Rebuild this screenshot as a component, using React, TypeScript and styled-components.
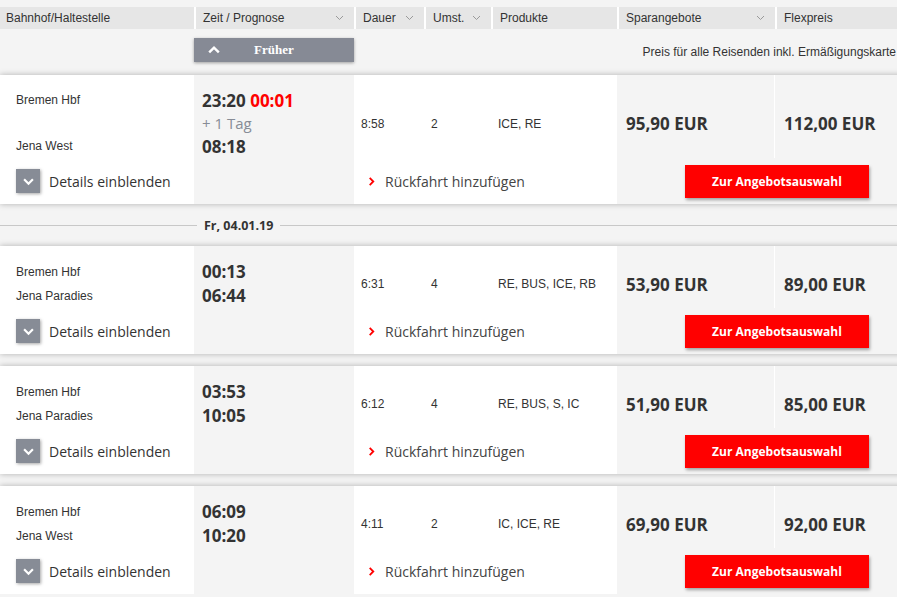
import styled, { createGlobalStyle } from "styled-components";

const GlobalStyle = createGlobalStyle`
  html, body {
    margin: 0;
    padding: 0;
    background: #f4f4f4;
    overflow: hidden;
  }
  * { box-sizing: border-box; }
`;

const COLS = "194px 160px 70px 67px 126px 158px 1fr";
const SANS = `"Liberation Sans", Arial, sans-serif`;
const DB = `"Open Sans", "Noto Sans", sans-serif`;

type Connection = {
  from: string;
  to: string;
  dep: string;
  delay?: string;
  nextDay?: boolean;
  arr: string;
  duration: string;
  changes: string;
  products: string;
  saver: string;
  flex: string;
};

const firstDay: Connection[] = [
  {
    from: "Bremen Hbf",
    to: "Jena West",
    dep: "23:20",
    delay: "00:01",
    nextDay: true,
    arr: "08:18",
    duration: "8:58",
    changes: "2",
    products: "ICE, RE",
    saver: "95,90 EUR",
    flex: "112,00 EUR",
  },
];

const secondDay: Connection[] = [
  {
    from: "Bremen Hbf",
    to: "Jena Paradies",
    dep: "00:13",
    arr: "06:44",
    duration: "6:31",
    changes: "4",
    products: "RE, BUS, ICE, RB",
    saver: "53,90 EUR",
    flex: "89,00 EUR",
  },
  {
    from: "Bremen Hbf",
    to: "Jena Paradies",
    dep: "03:53",
    arr: "10:05",
    duration: "6:12",
    changes: "4",
    products: "RE, BUS, S, IC",
    saver: "51,90 EUR",
    flex: "85,00 EUR",
  },
  {
    from: "Bremen Hbf",
    to: "Jena West",
    dep: "06:09",
    arr: "10:20",
    duration: "4:11",
    changes: "2",
    products: "IC, ICE, RE",
    saver: "69,90 EUR",
    flex: "92,00 EUR",
  },
];

const Page = styled.div`
  width: 910px;
  padding-top: 7px;
`;

const Header = styled.div`
  display: grid;
  grid-template-columns: ${COLS};
  height: 22px;
  background: #e6e6e6;
`;

const HeadCell = styled.div<{ $first?: boolean }>`
  display: flex;
  align-items: center;
  justify-content: space-between;
  padding: 0 10px 0 ${(p) => (p.$first ? "6px" : "7px")};
  border-left: ${(p) => (p.$first ? "none" : "2px solid #fff")};
  font-family: ${SANS};
  font-size: 12px;
  color: #333;
`;

const Toolbar = styled.div`
  display: grid;
  grid-template-columns: ${COLS};
  height: 46px;
`;

const EarlierButton = styled.button`
  grid-column: 2;
  margin-top: 9px;
  height: 24px;
  border: none;
  background: #868a95;
  box-shadow: 0 1px 3px rgba(0, 0, 0, 0.35);
  display: flex;
  align-items: center;
  padding: 0 0 0 14px;
  color: #fff;
  font-family: "Liberation Serif", "Times New Roman", serif;
  font-weight: 700;
  font-size: 13px;

  span {
    margin-left: 34px;
  }
`;

const PriceNote = styled.div`
  grid-column: 3 / 8;
  padding: 16px 14px 0 0;
  text-align: right;
  font-family: ${SANS};
  font-size: 12px;
  color: #333;
`;

const List = styled.div`
  display: flex;
  flex-direction: column;
  gap: 12px;
`;

const Row = styled.div`
  display: grid;
  grid-template-columns: ${COLS};
  grid-template-rows: auto 46px;
  background: #fff;
  box-shadow: 0 0 6px rgba(0, 0, 0, 0.28);
`;

const Cell = styled.div<{ $grey?: boolean; $divider?: boolean }>`
  padding: 14px 8px 0 8px;
  background: ${(p) => (p.$grey ? "#f4f4f4" : "#fff")};
  border-right: ${(p) => (p.$divider ? "1px solid #fff" : "none")};
  font-family: ${SANS};
  font-size: 12px;
  color: #333;
`;

const Stations = styled(Cell)<{ $lh: number }>`
  padding-left: 16px;
  display: flex;
  flex-direction: column;
  justify-content: space-between;
  line-height: ${(p) => p.$lh}px;
`;

const Times = styled(Cell)<{ $lh: number }>`
  font-family: ${DB};
  font-size: 16px;
  line-height: ${(p) => p.$lh}px;
`;

const TimeLine = styled.div`
  font-weight: 700;
  color: #333;
  font-size: 17px;
`;

const Delay = styled.span`
  color: #f00;
`;

const NextDay = styled.div`
  color: #878c96;
  font-size: 15px;
`;

const Centered = styled(Cell)`
  display: flex;
  align-items: center;
  padding-left: 7px;
`;

const Price = styled(Centered)`
  font-family: ${DB};
  font-weight: 700;
  font-size: 17px;
  padding-left: 9px;
`;

const ActionCell = styled.div<{ $grey?: boolean; $span?: string }>`
  grid-column: ${(p) => p.$span ?? "auto"};
  display: flex;
  align-items: center;
  background: ${(p) => (p.$grey ? "#f4f4f4" : "#fff")};
  font-family: ${DB};
  font-size: 14px;
  color: #333;
`;

const DetailsToggle = styled.div`
  display: flex;
  align-items: center;
  gap: 9px;
  padding-left: 16px;
`;

const SquareButton = styled.span`
  width: 24px;
  height: 24px;
  background: #878c96;
  box-shadow: 1px 1px 3px rgba(0, 0, 0, 0.35);
  display: flex;
  align-items: center;
  justify-content: center;
`;

const ReturnLink = styled.div`
  display: flex;
  align-items: center;
  gap: 9px;
  padding-left: 13px;
  color: #444;
`;

const OfferButton = styled.button`
  margin-left: 68px;
  width: 184px;
  height: 33px;
  border: none;
  background: #f00;
  color: #fff;
  font-family: ${DB};
  font-weight: 700;
  font-size: 12px;
  box-shadow: 1px 2px 3px rgba(0, 0, 0, 0.35);
`;

const DateBar = styled.div`
  height: 18px;
  display: flex;
  align-items: center;
`;

const Rule = styled.div<{ $w?: number }>`
  height: 1px;
  background: #c8c8c8;
  flex: ${(p) => (p.$w ? `0 0 ${p.$w}px` : "1")};
`;

const DateLabel = styled.span`
  padding: 0 7px;
  font-family: ${DB};
  font-weight: 700;
  font-size: 12.5px;
  color: #333;
`;

const SortArrow = () => (
  <svg width="9" height="6" viewBox="0 0 9 6">
    <polyline points="1,1 4.5,4.5 8,1" fill="none" stroke="#9a9a9a" strokeWidth="1" />
  </svg>
);

const Chevron = ({ dir, color, size = 10 }: { dir: "up" | "down" | "right"; color: string; size?: number }) => {
  const pts =
    dir === "up" ? "1,7 5,3 9,7" : dir === "down" ? "1,3 5,7 9,3" : "3,1 7,5 3,9";
  return (
    <svg width={size} height={size} viewBox="0 0 10 10">
      <polyline points={pts} fill="none" stroke={color} strokeWidth="2" />
    </svg>
  );
};

const ConnectionRow = ({ c }: { c: Connection }) => {
  const lh = c.nextDay ? 23 : 24;
  return (
    <Row>
      <Stations $lh={lh}>
        <div>{c.from}</div>
        <div>{c.to}</div>
      </Stations>
      <Times $grey $lh={lh}>
        <TimeLine>
          {c.dep}
          {c.delay && <Delay> {c.delay}</Delay>}
        </TimeLine>
        {c.nextDay && <NextDay>+ 1 Tag</NextDay>}
        <TimeLine>{c.arr}</TimeLine>
      </Times>
      <Centered>{c.duration}</Centered>
      <Centered>{c.changes}</Centered>
      <Centered>{c.products}</Centered>
      <Price $grey $divider>
        {c.saver}
      </Price>
      <Price $grey>{c.flex}</Price>

      <ActionCell>
        <DetailsToggle>
          <SquareButton>
            <Chevron dir="down" color="#fff" size={11} />
          </SquareButton>
          Details einblenden
        </DetailsToggle>
      </ActionCell>
      <ActionCell $grey />
      <ActionCell $span="3 / 6">
        <ReturnLink>
          <Chevron dir="right" color="#f00" size={9} />
          Rückfahrt hinzufügen
        </ReturnLink>
      </ActionCell>
      <ActionCell $grey $span="6 / 8">
        <OfferButton>Zur Angebotsauswahl</OfferButton>
      </ActionCell>
    </Row>
  );
};

export default function App() {
  return (
    <Page>
      <GlobalStyle />
      <Header>
        <HeadCell $first>Bahnhof/Haltestelle</HeadCell>
        <HeadCell>
          Zeit / Prognose <SortArrow />
        </HeadCell>
        <HeadCell>
          Dauer <SortArrow />
        </HeadCell>
        <HeadCell>
          Umst. <SortArrow />
        </HeadCell>
        <HeadCell>Produkte</HeadCell>
        <HeadCell>
          Sparangebote <SortArrow />
        </HeadCell>
        <HeadCell>Flexpreis</HeadCell>
      </Header>
      <Toolbar>
        <EarlierButton>
          <Chevron dir="up" color="#fff" size={12} />
          <span>Früher</span>
        </EarlierButton>
        <PriceNote>Preis für alle Reisenden inkl. Ermäßigungskarte</PriceNote>
      </Toolbar>
      <List>
        {firstDay.map((c, i) => (
          <ConnectionRow key={`a${i}`} c={c} />
        ))}
        <DateBar>
          <Rule $w={197} />
          <DateLabel>Fr, 04.01.19</DateLabel>
          <Rule />
        </DateBar>
        {secondDay.map((c, i) => (
          <ConnectionRow key={`b${i}`} c={c} />
        ))}
      </List>
    </Page>
  );
}
